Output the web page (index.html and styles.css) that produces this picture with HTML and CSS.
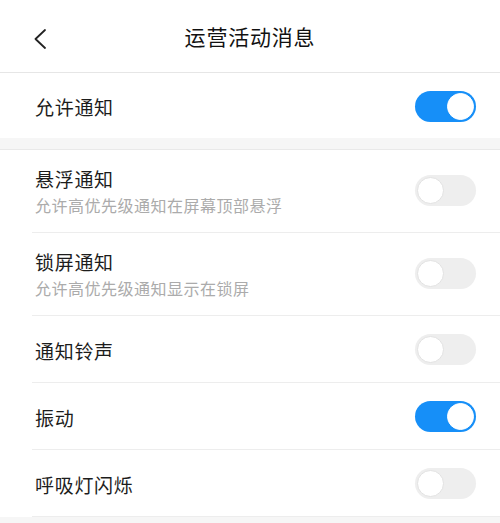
FILE: index.html
```html
<!DOCTYPE html>
<html lang="zh-CN">
<head>
<meta charset="utf-8">
<title>运营活动消息</title>
<link rel="stylesheet" href="styles.css">
</head>
<body>
<div class="page">
  <header class="topbar">
    <span class="back">
      <svg width="14" height="20" viewBox="0 0 14 20"><path d="M12 1 L2.5 10 L12 19" fill="none" stroke="#222" stroke-width="1.8" stroke-linecap="round" stroke-linejoin="round"/></svg>
    </span>
    <h1 class="title">运营活动消息</h1>
  </header>

  <section class="group">
    <div class="row single first">
      <span class="label">允许通知</span>
      <span class="switch on"><span class="knob"></span></span>
    </div>
  </section>

  <div class="band"></div>

  <section class="group list">
    <div class="row double">
      <div class="texts">
        <span class="label">悬浮通知</span>
        <span class="sub">允许高优先级通知在屏幕顶部悬浮</span>
      </div>
      <span class="switch"><span class="knob"></span></span>
    </div>
    <div class="row double">
      <div class="texts">
        <span class="label">锁屏通知</span>
        <span class="sub">允许高优先级通知显示在锁屏</span>
      </div>
      <span class="switch"><span class="knob"></span></span>
    </div>
    <div class="row single">
      <span class="label">通知铃声</span>
      <span class="switch"><span class="knob"></span></span>
    </div>
    <div class="row single">
      <span class="label">振动</span>
      <span class="switch on"><span class="knob"></span></span>
    </div>
    <div class="row single">
      <span class="label">呼吸灯闪烁</span>
      <span class="switch"><span class="knob"></span></span>
    </div>
  </section>
  <div class="bottom"></div>
</div>
</body>
</html>
```

FILE: styles.css
```css
* { box-sizing: border-box; }
html, body {
  margin: 0;
  padding: 0;
  background: #ffffff;
  font-family: "Noto Sans CJK SC", "Noto Sans", sans-serif;
  color: #1c1c1c;
}
.page {
  width: 500px;
  height: 523px;
  display: flex;
  flex-direction: column;
  overflow: hidden;
}
.topbar {
  height: 73px;
  border-bottom: 1px solid #e6e6e6;
  display: flex;
  align-items: center;
  justify-content: center;
  position: relative;
}
.back {
  position: absolute;
  left: 33px;
  top: 29px;
  width: 14px;
  height: 20px;
  display: block;
}
.back svg { display: block; }
.title {
  margin: 0;
  font-size: 21px;
  font-weight: 400;
  letter-spacing: 0.8px;
  color: #111;
  line-height: 28px;
}
.group { background: #fff; }
.row {
  display: flex;
  align-items: center;
  justify-content: space-between;
  margin-left: 32px;
  padding-left: 3px;
  padding-right: 24px;
  border-bottom: 1px solid #ededed;
}
.row.single { height: 67px; padding-top: 3px; }
.row.first { height: 65px; border-bottom: none; margin-left: 0; padding-left: 35px; }
.row.double { height: 83px; padding-top: 1px; }
.label {
  font-size: 19px;
  letter-spacing: 0.7px;
  line-height: 24px;
  color: #1c1c1c;
}
.texts {
  display: flex;
  flex-direction: column;
}
.sub {
  font-size: 16px;
  letter-spacing: 0.5px;
  line-height: 22px;
  margin-top: 3px;
  color: #ababab;
}
.band {
  height: 12px;
  background: #f6f6f6;
  border-bottom: 1px solid #e9e9e9;
}
.bottom {
  flex: 1;
  background: #f6f6f6;
}
.switch {
  width: 61px;
  height: 31px;
  border-radius: 16px;
  background: #eeeeee;
  display: flex;
  align-items: center;
  padding: 0 2px;
  flex-shrink: 0;
  margin-top: -2px;
}
.switch .knob {
  width: 27px;
  height: 27px;
  border-radius: 50%;
  background: #fff;
  border: 1px solid #e2e2e2;
}
.switch.on {
  background: #168ff8;
  justify-content: flex-end;
}
.switch.on .knob { border-color: #fff; }
```
